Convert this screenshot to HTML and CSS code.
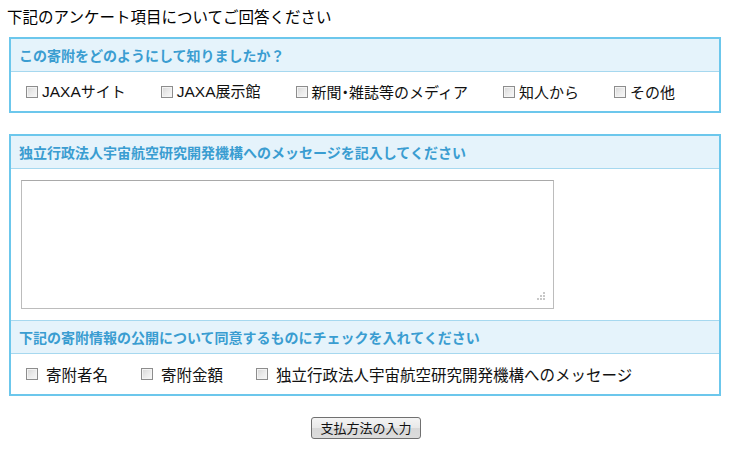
FILE: index.html
```html
<!DOCTYPE html>
<html lang="ja">
<head>
<meta charset="utf-8">
<title>アンケート</title>
<link rel="stylesheet" href="styles.css">
</head>
<body>
<div class="page">
  <h1 class="title">下記のアンケート項目についてご回答ください</h1>

  <section class="box">
    <div class="box-head first">この寄附をどのようにして知りましたか？</div>
    <div class="row row-tight">
      <label class="opt"><span class="cb"></span><span class="txt"><span class="lat">JAXA</span>サイト</span></label>
      <label class="opt"><span class="cb"></span><span class="txt"><span class="lat">JAXA</span>展示館</span></label>
      <label class="opt"><span class="cb"></span><span class="txt">新聞<span class="dot">・</span>雑誌等のメディア</span></label>
      <label class="opt"><span class="cb"></span><span class="txt">知人から</span></label>
      <label class="opt"><span class="cb"></span><span class="txt">その他</span></label>
    </div>
  </section>

  <section class="box">
    <div class="box-head first">独立行政法人宇宙航空研究開発機構へのメッセージを記入してください</div>
    <div class="text-area-wrap">
      <div class="ta">
        <textarea class="message"></textarea>
        <svg class="grip" width="9" height="9" viewBox="0 0 9 9">
          <rect x="7" y="1" width="2" height="2" fill="#c8c8c8"/>
          <rect x="7" y="4" width="2" height="2" fill="#c8c8c8"/>
          <rect x="7" y="7" width="2" height="2" fill="#c8c8c8"/>
          <rect x="4" y="4" width="2" height="2" fill="#c8c8c8"/>
          <rect x="4" y="7" width="2" height="2" fill="#c8c8c8"/>
          <rect x="1" y="7" width="2" height="2" fill="#c8c8c8"/>
        </svg>
      </div>
    </div>
    <div class="box-head">下記の寄附情報の公開について同意するものにチェックを入れてください</div>
    <div class="row row-wide">
      <label class="opt"><span class="cb"></span><span class="txt">寄附者名</span></label>
      <label class="opt"><span class="cb"></span><span class="txt">寄附金額</span></label>
      <label class="opt"><span class="cb"></span><span class="txt">独立行政法人宇宙航空研究開発機構へのメッセージ</span></label>
    </div>
  </section>

  <div class="actions">
    <button class="btn" type="button">支払方法の入力</button>
  </div>
</div>
</body>
</html>
```

FILE: styles.css
```css
html, body {
  margin: 0;
  padding: 0;
  background: #ffffff;
}

body {
  font-family: "Noto Sans CJK JP", "Liberation Sans", sans-serif;
  color: #111111;
}

.page {
  width: 712px;
  padding: 6px 0 0 9px;
}

.title {
  margin: 0 0 11px -2px;
  font-size: 15.5px;
  line-height: 20px;
  font-weight: normal;
  color: #000000;
}

.box {
  border: 2px solid #6cc7ec;
  margin-bottom: 21px;
}

.box-head {
  height: 32px;
  line-height: 32px;
  padding-left: 8px;
  background: #e5f3fb;
  color: #3a9dd1;
  font-size: 14px;
  font-weight: bold;
  border-top: 1px solid #a6d8ef;
  border-bottom: 1px solid #a6d8ef;
}

.box-head.first {
  border-top: none;
}

.row {
  height: 39px;
  display: flex;
  align-items: center;
  padding-left: 15px;
  font-size: 15px;
  color: #111111;
}

.row-tight {
  gap: 35px;
}

.row-tight .opt {
  gap: 4px;
}

.dot {
  font-feature-settings: "palt";
}

.row-wide {
  gap: 33px;
  height: 40px;
  font-size: 15.5px;
}

.row-wide .opt {
  gap: 8px;
}

.opt {
  display: flex;
  align-items: center;
  white-space: nowrap;
  line-height: 20px;
}

.lat {
  font-family: "Liberation Sans", sans-serif;
  font-size: 15.5px;
}

.cb {
  width: 10px;
  height: 10px;
  border: 1px solid #8d8d8d;
  background: linear-gradient(135deg, #d6d6d6 0%, #ececec 55%, #f8f8f8 100%);
  box-shadow: inset 0 0 0 1px #f4f4f4;
  flex: none;
}

.text-area-wrap {
  padding: 11px 0 11px 10px;
}

.ta {
  position: relative;
  width: 533px;
  height: 129px;
}

.message {
  display: block;
  box-sizing: border-box;
  width: 533px;
  height: 129px;
  margin: 0;
  border: 1px solid #bcbcbc;
  border-top-color: #a9a9a9;
  resize: none;
  background: #ffffff;
  font-family: "Noto Sans CJK JP", sans-serif;
}

.grip {
  position: absolute;
  right: 9px;
  bottom: 9px;
}

.actions {
  display: flex;
  justify-content: center;
  padding-left: 2px;
}

.btn {
  box-sizing: border-box;
  width: 110px;
  height: 22px;
  padding: 0;
  border: 1px solid #707070;
  border-radius: 3px;
  background: linear-gradient(#f4f4f4 0%, #e8e8e8 50%, #d8d8d8 51%, #dcdcdc 100%);
  font-family: "Noto Sans CJK JP", sans-serif;
  font-size: 13px;
  line-height: 20px;
  color: #111111;
}
```
